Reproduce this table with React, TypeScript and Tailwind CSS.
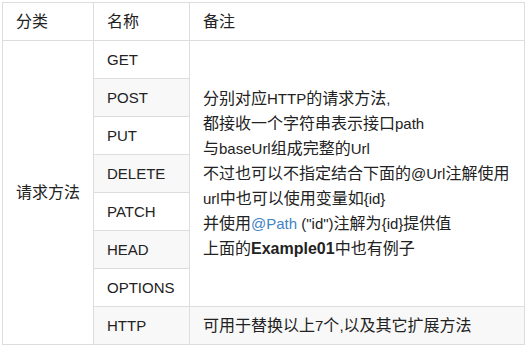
import React from 'react'

const methods = ['GET', 'POST', 'PUT', 'DELETE', 'PATCH', 'HEAD', 'OPTIONS']

const cell = 'border border-[#ddd] px-[13px] py-[6px] align-middle'

// CJK glyphs render a touch larger than the latin text in the source
const T = ({ t }: { t: string }) => (
  <>
    {t.split(/([\u3000-\u9fff\uff00-\uffef]+)/).map((part, i) =>
      /[\u3000-\u9fff\uff00-\uffef]/.test(part) ? (
        <span key={i} className="text-[16px]">
          {part}
        </span>
      ) : (
        part
      )
    )}
  </>
)

export default function App() {
  return (
    <div
      className="p-[2px] bg-white text-[#222] text-[15px] leading-[25px]"
      style={{ fontFamily: '"Liberation Sans", "Noto Sans CJK SC", sans-serif' }}
    >
      <table className="table-fixed border-collapse w-[522px]">
        <colgroup>
          <col className="w-[91px]" />
          <col className="w-[96px]" />
          <col className="w-[335px]" />
        </colgroup>
        <thead>
          <tr className="bg-white">
            <th className={`${cell} text-left font-normal`}><T t="分类" /></th>
            <th className={`${cell} text-left font-normal`}><T t="名称" /></th>
            <th className={`${cell} text-left font-normal`}><T t="备注" /></th>
          </tr>
        </thead>
        <tbody>
          {methods.map((m, i) => (
            <tr key={m} className="even:bg-[#f8f8f8]">
              {i === 0 && (
                <td rowSpan={8} className={`${cell} bg-white`}>
                  <T t="请求方法" />
                </td>
              )}
              <td className={cell}>{m}</td>
              {i === 0 && (
                <td rowSpan={7} className={`${cell} bg-white`}>
                  <T t="分别对应HTTP的请求方法," />
                  <br />
                  <T t="都接收一个字符串表示接口path" />
                  <br />
                  <T t="与baseUrl组成完整的Url" />
                  <br />
                  <T t="不过也可以不指定结合下面的@Url注解使用" />
                  <br />
                  <T t="url中也可以使用变量如{id}" />
                  <br />
                  <T t="并使用" />
                  <span className="text-[#4183c4]">@Path</span> <T t={'("id")注解为{id}提供值'} />
                  <br />
                  <T t="上面的" />
                  <strong className="font-bold text-[16px]">Example01</strong>
                  <T t="中也有例子" />
                </td>
              )}
            </tr>
          ))}
          <tr className="bg-[#f8f8f8]">
            <td className={cell}>HTTP</td>
            <td className={cell}>
              <T t="可用于替换以上7个,以及其它扩展方法" />
            </td>
          </tr>
        </tbody>
      </table>
    </div>
  )
}
